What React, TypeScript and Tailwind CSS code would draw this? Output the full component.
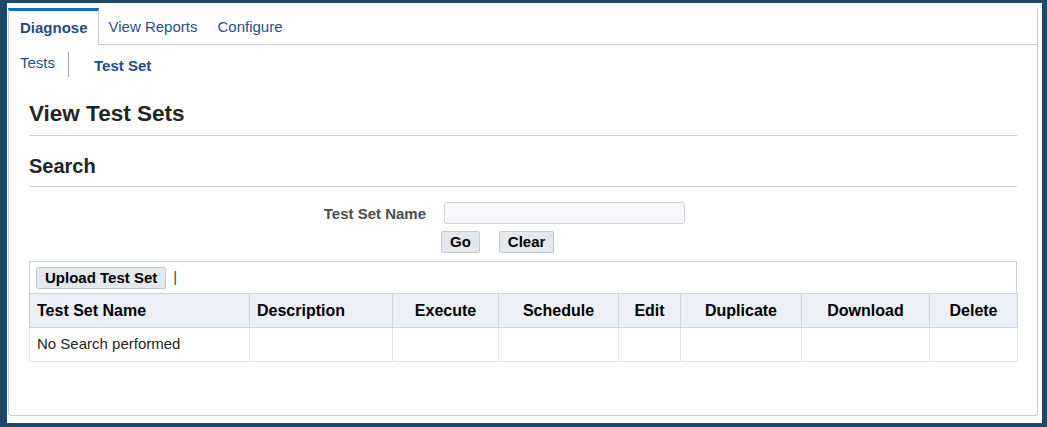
const columns = [
  { label: 'Test Set Name', width: 220, align: 'left' },
  { label: 'Description', width: 143, align: 'left' },
  { label: 'Execute', width: 106, align: 'center' },
  { label: 'Schedule', width: 120, align: 'center' },
  { label: 'Edit', width: 62, align: 'center' },
  { label: 'Duplicate', width: 121, align: 'center' },
  { label: 'Download', width: 128, align: 'center' },
  { label: 'Delete', width: 88, align: 'center' },
]

function Tabs() {
  return (
    <div className="flex h-[37px] items-stretch">
      <div className="flex items-center border-t-[3px] border-r border-l border-t-[#0b6cc9] border-r-[#c8cdd3] border-l-[#c8cdd3] pr-[10px] pl-[11px] text-[15px] font-bold text-[#234a86]">
        Diagnose
      </div>
      <div className="flex items-center border-b border-[#c8cdd3] px-[10px] pt-[3px] text-[15px] text-[#1f4f8f]">
        View Reports
      </div>
      <div className="flex items-center border-b border-[#c8cdd3] px-[10px] pt-[3px] text-[15px] text-[#1f4f8f]">
        Configure
      </div>
      <div className="flex-1 border-r border-b border-[#c8cdd3]" />
    </div>
  )
}

function Button({ children }: { children: React.ReactNode }) {
  return (
    <button
      type="button"
      className="h-[22px] rounded-[2px] border border-[#c3c8ce] bg-[#e4e7ec] px-[8px] text-[15px] leading-[18px] font-bold text-black"
    >
      {children}
    </button>
  )
}

export default function App() {
  return (
    <div
      className="h-[427px] w-[1047px] bg-[#1d4a6a] pt-[3px] pr-[5px] pb-[4px] pl-[7px]"
      style={{ fontFamily: '"Liberation Sans", Arial, sans-serif' }}
    >
      <div className="flex h-full flex-col bg-white pt-[5px] pr-[4px] pb-[7px] pl-[1px]">
        <Tabs />
        <div className="flex-1 rounded-b-[3px] border-r border-b border-l border-[#c8cdd3]">
          {/* sub tabs */}
          <div className="flex h-[35px] items-start pl-[11px]">
            <span className="mt-[9px] text-[15px] leading-[17px] text-[#1f4f8f]">Tests</span>
            <span className="mt-[7px] ml-[13px] h-[25px] w-px bg-[#9aa4ae]" />
            <span className="mt-[12px] ml-[25px] text-[15px] leading-[17px] font-bold text-[#1d4f8c]">
              Test Set
            </span>
          </div>

          <div className="px-[20px] pt-[21px]">
            <h1 className="border-b border-[#c9d3db] pb-[8px] text-[22.5px] leading-[26px] font-bold text-[#242424]">
              View Test Sets
            </h1>
            <h2 className="mt-[18px] border-b border-[#c9d3db] pb-[8px] text-[20px] leading-[24px] font-bold text-[#242424]">
              Search
            </h2>

            <div className="mt-[15px] flex items-center">
              <label className="w-[397px] text-right text-[15px] leading-[17px] font-bold text-[#4d4d4d]">
                Test Set Name
              </label>
              <input
                type="text"
                className="ml-[18px] h-[22px] w-[241px] rounded-[3px] border border-[#c8d4dc] bg-[#f8f8fb] outline-none"
              />
            </div>
            <div className="mt-[7px] flex gap-[19px] pl-[412px]">
              <Button>Go</Button>
              <Button>Clear</Button>
            </div>

            <div className="mt-[8px] w-[988px]">
              <div className="flex h-[32px] items-center border-t border-r border-l border-[#c8d0d8] pl-[6px]">
                <Button>Upload Test Set</Button>
                <span className="ml-[7px] text-[15px] text-[#444]">|</span>
              </div>
              <table className="w-full table-fixed border-collapse border border-[#c8d0d8]">
                <colgroup>
                  {columns.map((c) => (
                    <col key={c.label} style={{ width: c.width }} />
                  ))}
                </colgroup>
                <thead>
                  <tr className="h-[34px] bg-[#eceff5]">
                    {columns.map((c) => (
                      <th
                        key={c.label}
                        className={
                          c.align === 'left'
                            ? 'border border-[#cdd3dc] pl-[7px] text-left text-[16px] font-bold text-black'
                            : 'border border-[#cdd3dc] text-center text-[16px] font-bold text-black'
                        }
                      >
                        {c.label}
                      </th>
                    ))}
                  </tr>
                </thead>
                <tbody>
                  <tr className="h-[34px]">
                    <td className="border border-[#e3e6ea] pl-[7px] text-[15px] text-[#262626]">
                      No Search performed
                    </td>
                    {columns.slice(1).map((c) => (
                      <td key={c.label} className="border border-[#e3e6ea]" />
                    ))}
                  </tr>
                </tbody>
              </table>
            </div>
          </div>
        </div>
      </div>
    </div>
  )
}
